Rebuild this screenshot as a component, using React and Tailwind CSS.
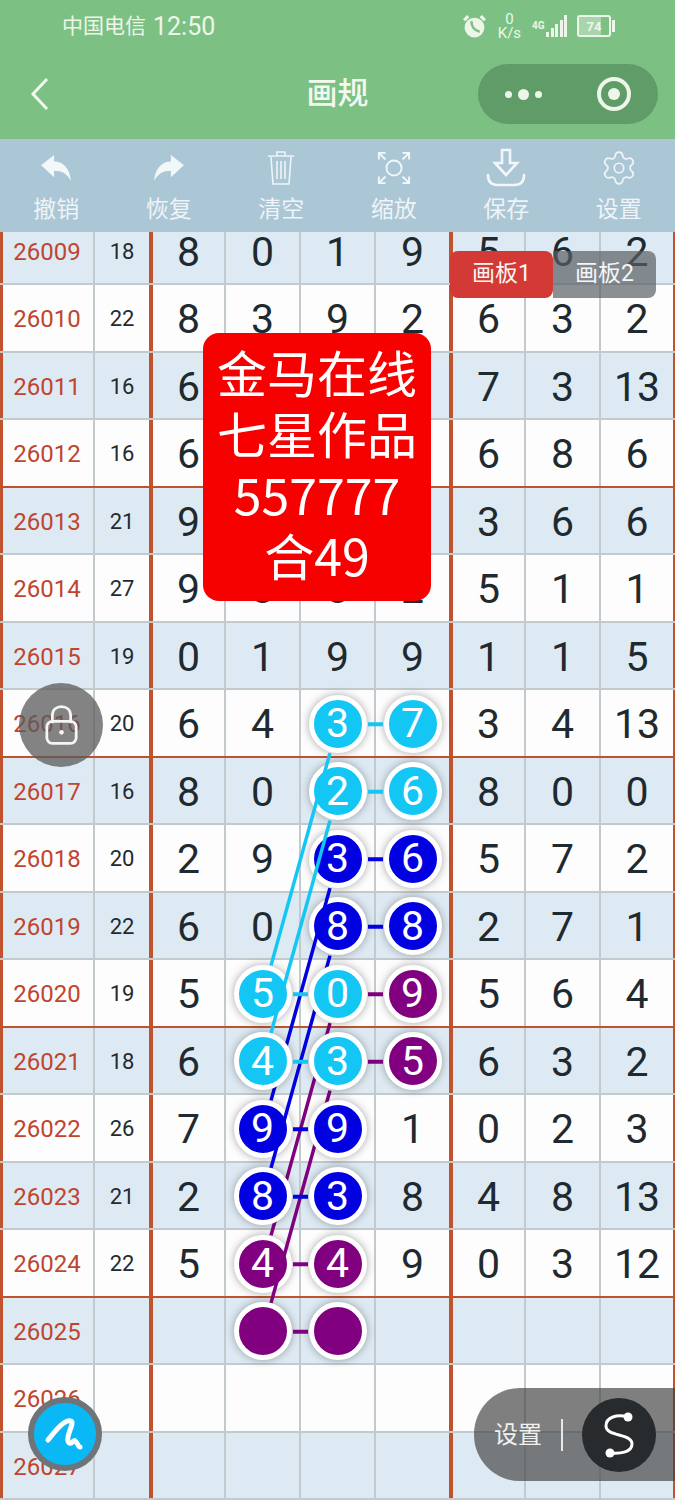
import { Settings } from 'lucide-react';

const ROW_H = 67.5;
const colX = [188, 263, 338, 413, 488, 563, 638];
const rowY = (i) => i * ROW_H + ROW_H / 2;

const rows = [
  ['26009', '18', [8, 0, 1, 9, 5, 6, 2]],
  ['26010', '22', [8, 3, 9, 2, 6, 3, 2]],
  ['26011', '16', [6, '', '', '', 7, 3, 13]],
  ['26012', '16', [6, '', '', '', 6, 8, 6]],
  ['26013', '21', [9, '', '', '', 3, 6, 6]],
  ['26014', '27', [9, 8, 8, 2, 5, 1, 1]],
  ['26015', '19', [0, 1, 9, 9, 1, 1, 5]],
  ['26016', '20', [6, 4, 3, 7, 3, 4, 13]],
  ['26017', '16', [8, 0, 2, 6, 8, 0, 0]],
  ['26018', '20', [2, 9, 3, 6, 5, 7, 2]],
  ['26019', '22', [6, 0, 8, 8, 2, 7, 1]],
  ['26020', '19', [5, 5, 0, 9, 5, 6, 4]],
  ['26021', '18', [6, 4, 3, 5, 6, 3, 2]],
  ['26022', '26', [7, 9, 9, 1, 0, 2, 3]],
  ['26023', '21', [2, 8, 3, 8, 4, 8, 13]],
  ['26024', '22', [5, 4, 4, 9, 0, 3, 12]],
  ['26025', '', ['', '', '', '', '', '', '']],
  ['26026', '', ['', '', '', '', '', '', '']],
  ['26027', '', ['', '', '', '', '', '', '']],
];

// row index -> { column index: colour key }
const marks = {
  7: { 2: 'c', 3: 'c' },
  8: { 2: 'c', 3: 'c' },
  9: { 2: 'b', 3: 'b' },
  10: { 2: 'b', 3: 'b' },
  11: { 1: 'c', 2: 'c', 3: 'p' },
  12: { 1: 'c', 2: 'c', 3: 'p' },
  13: { 1: 'b', 2: 'b' },
  14: { 1: 'b', 2: 'b' },
  15: { 1: 'p', 2: 'p' },
  16: { 1: 'p', 2: 'p' },
};

const dotStyles = {
  c: 'z-30 bg-[#14c6f4]',
  b: 'z-20 bg-[#0000e0]',
  p: 'z-10 bg-[#800080]',
};

const layers = [
  {
    color: '#800080',
    z: 'z-[11]',
    slants: [[11, 15], [12, 16]],
    links: [[11, 2], [12, 2], [15, 1], [16, 1]],
  },
  {
    color: '#0000e0',
    z: 'z-[21]',
    slants: [[9, 13], [10, 14]],
    links: [[9, 2], [10, 2], [13, 1], [14, 1]],
  },
  {
    color: '#14c6f4',
    z: 'z-[31]',
    slants: [[7, 11], [8, 12]],
    links: [[7, 2], [8, 2], [11, 1], [12, 1]],
  },
];

function LineLayer({ layer }) {
  return (
    <svg
      className={`absolute left-0 top-0 pointer-events-none ${layer.z}`}
      width="675"
      height="1282.5"
      viewBox="0 0 675 1282.5"
    >
      {layer.slants.map(([from, to]) => {
        const x1 = colX[2];
        const y1 = rowY(from);
        const x2 = colX[1];
        const y2 = rowY(to);
        const len = Math.hypot(x2 - x1, y2 - y1);
        const ux = (x2 - x1) / len;
        const uy = (y2 - y1) / len;
        return (
          <line
            key={from}
            x1={x1 + ux * 30}
            y1={y1 + uy * 30}
            x2={x2 - ux * 30}
            y2={y2 - uy * 30}
            stroke={layer.color}
            strokeWidth="3.5"
          />
        );
      })}
      {layer.links.map(([row, col]) => (
        <line
          key={`${row}-${col}`}
          x1={colX[col] + 30}
          y1={rowY(row)}
          x2={colX[col + 1] - 30}
          y2={rowY(row)}
          stroke={layer.color}
          strokeWidth="4"
        />
      ))}
    </svg>
  );
}

function Row({ index, issue, sum, digits }) {
  const striped = index % 2 === 0;
  const heavy = index % 4 === 3 && index < 16;
  return (
    <div
      className={`grid grid-cols-[93px_56px_75px_75px_75px_75px_75px_75px_76px] h-[67.5px] border-b-2 ${
        heavy ? 'border-[#c0532e]' : 'border-[#c3cace]'
      } ${striped ? 'bg-[#deeaf3]' : 'bg-[#fdfdfd]'}`}
    >
      <div className="flex items-center justify-center pt-[3px] pr-[2px] border-l-[3px] border-[#c0532e] text-[24px] text-[#c0452f]">
        {issue}
      </div>
      <div className="flex items-center justify-center pt-[2px] border-l-2 border-[#c3cace] text-[22px] text-[#222b30]">
        {sum}
      </div>
      {digits.map((d, col) => {
        const mark = marks[index]?.[col];
        const edge =
          col === 0 || col === 4
            ? 'border-l-[4px] border-[#c0532e]'
            : 'border-l-2 border-[#c3cace]';
        return (
          <div
            key={col}
            className={`relative flex items-center justify-center pt-[2px] text-[41px] font-normal text-[#1f2a30] ${edge} ${
              col === 6 ? 'border-r-2 border-r-[#c0532e]' : ''
            }`}
          >
            {mark ? (
              <div
                className={`relative flex items-center justify-center w-[58px] h-[58px] shrink-0 rounded-full border-[5px] border-white text-white text-[41px] font-normal shadow-[0_0_8px_rgba(0,0,0,0.35)] ${dotStyles[mark]}`}
              >
                {index === 16 ? '' : d}
              </div>
            ) : (
              <span className="mt-[2px]">{d}</span>
            )}
          </div>
        );
      })}
    </div>
  );
}

function ToolButton({ label, children }) {
  return (
    <div className="flex-1 flex flex-col items-center">
      <div className="h-[42px] flex items-center justify-center">{children}</div>
      <span className="mt-[6px] text-[23px] leading-[30px] text-[#eef4f7]">{label}</span>
    </div>
  );
}

function StatusIcons() {
  return (
    <div className="flex items-center gap-[10px] text-[#eef6ea]">
      <svg width="25" height="25" viewBox="0 0 24 24">
        <circle cx="12" cy="13" r="9.5" fill="#eef6ea" />
        <path d="M2 6l4-4M22 6l-4-4" stroke="#eef6ea" strokeWidth="3" />
        <path d="M9 7c0 5 3 9 8 10" stroke="#7cc183" strokeWidth="2.5" fill="none" />
      </svg>
      <div className="flex flex-col items-center leading-[14px] text-[15px] w-[25px]">
        <span>0</span>
        <span>K/s</span>
      </div>
      <div className="flex items-end gap-[1.5px] h-[22px]">
        <span className="text-[10px] leading-[10px] font-bold mb-[6px]">4G</span>
        <span className="w-[3px] h-[5px] bg-[#eef6ea]" />
        <span className="w-[3px] h-[9px] bg-[#eef6ea]" />
        <span className="w-[3px] h-[13px] bg-[#eef6ea]" />
        <span className="w-[3px] h-[17px] bg-[#eef6ea]" />
        <span className="w-[3px] h-[22px] bg-[#eef6ea]" />
      </div>
      <div className="flex items-center gap-[1px]">
        <div className="relative flex items-center justify-center w-[34px] h-[22px] rounded-[3px] border-2 border-[#eef6ea] overflow-hidden">
          <div className="absolute left-0 top-0 bottom-0 w-[74%] bg-[#a9d5ad]" />
          <span className="relative text-[13px] font-bold leading-none">74</span>
        </div>
        <span className="w-[3px] h-[12px] bg-[#eef6ea]" />
      </div>
    </div>
  );
}

export default function App() {
  return (
    <div className="relative w-[675px] h-[1500px] overflow-hidden bg-white font-['Roboto','Noto_Sans_CJK_SC',sans-serif]">
      {/* Title bar and toolbar */}
      <div className="relative z-50">
        <div className="h-[139px] bg-[#7cc183] flex flex-col">
          <div className="h-[52px] flex items-center justify-between pl-[62px] pr-[60px] text-[#eef6ea]">
            <span className="flex items-center gap-[7px] leading-none">
              <span className="text-[21px]">中国电信</span>
              <span className="text-[25px]">12:50</span>
            </span>
            <StatusIcons />
          </div>
          <div className="relative flex items-center justify-between h-[60px] mt-[12px] pl-[30px] pr-[17px]">
            <svg width="20" height="34" viewBox="0 0 20 34" fill="none" stroke="#f3f8f0" strokeWidth="3">
              <path d="M17 2L3 17l14 15" />
            </svg>
            <span className="absolute left-0 right-0 text-center text-[31px] font-medium text-[#f3f8f0] pointer-events-none">
              画规
            </span>
            <div className="flex items-center justify-between w-[180px] h-[60px] rounded-full bg-[#609c68] pl-[27px] pr-[27px]">
              <div className="flex items-center gap-[6px]">
                <span className="w-[7px] h-[7px] rounded-full bg-[#eef6ea]" />
                <span className="w-[11px] h-[11px] rounded-full bg-[#eef6ea]" />
                <span className="w-[7px] h-[7px] rounded-full bg-[#eef6ea]" />
              </div>
              <div className="flex items-center justify-center w-[34px] h-[34px] rounded-full border-[4px] border-[#eef6ea]">
                <span className="w-[12px] h-[12px] rounded-full bg-[#eef6ea]" />
              </div>
            </div>
          </div>
        </div>
        <div className="h-[93px] bg-[#abc6d5] flex pt-[8px]">
          <ToolButton label="撤销">
            <svg width="32" height="28" viewBox="0 0 34 30" fill="#f2f7fa">
              <path d="M1 12L15 1v7c10 0 17 8 18 21-4-8-10-11-18-11v7z" />
            </svg>
          </ToolButton>
          <ToolButton label="恢复">
            <svg width="32" height="28" viewBox="0 0 34 30" fill="#f2f7fa">
              <path d="M33 12L19 1v7C9 8 2 16 1 29c4-8 10-11 18-11v7z" />
            </svg>
          </ToolButton>
          <ToolButton label="清空">
            <svg width="28" height="36" viewBox="0 0 28 36" fill="none" stroke="#eef4f7" strokeWidth="1.6">
              <path d="M1 6h26M10 6V2h8v4M4 7l2 27h16l2-27M10 11v18M14 11v18M18 11v18" />
            </svg>
          </ToolButton>
          <ToolButton label="缩放">
            <svg width="34" height="34" viewBox="0 0 36 36" fill="none" stroke="#f2f7fa" strokeWidth="2">
              <circle cx="18" cy="18" r="8" />
              <path d="M2 9V2h7M2 2l7 7M34 9V2h-7M34 2l-7 7M2 27v7h7M2 34l7-7M34 27v7h-7M34 34l-7-7" />
            </svg>
          </ToolButton>
          <ToolButton label="保存">
            <svg width="42" height="40" viewBox="0 0 42 40" fill="none" stroke="#f2f7fa" strokeWidth="2.6">
              <path d="M17 2h8v13h7L21 27 10 15h7z" />
              <path d="M3 27c0 7 4 10 10 10h16c6 0 10-3 10-10" strokeLinecap="round" />
            </svg>
          </ToolButton>
          <ToolButton label="设置">
            <Settings size={38} color="#eef4f7" strokeWidth={1.1} />
          </ToolButton>
        </div>
      </div>

      {/* Chart grid, first row runs under the toolbar */}
      <div className="relative mt-[-14.5px]">
        {rows.map(([issue, sum, digits], i) => (
          <Row key={issue} index={i} issue={issue} sum={sum} digits={digits} />
        ))}
        {layers.map((layer) => (
          <LineLayer key={layer.color} layer={layer} />
        ))}
      </div>

      {/* Board tabs */}
      <div className="absolute z-40 left-[450px] top-[251px] flex w-[206px] h-[47px] text-[23px] text-[#f5f5f5]">
        <div className="relative z-10 flex-1 flex items-center justify-center rounded-[8px] bg-[#d43a35]">画板1</div>
        <div className="flex-1 flex items-center justify-center rounded-r-[8px] bg-[#5a5f63]/70">画板2</div>
      </div>

      {/* Red note */}
      <div className="absolute z-40 left-[203px] top-[333px] w-[228px] h-[268px] rounded-[16px] bg-[#f60000] flex flex-col items-center justify-center pb-[8px] text-white text-[50px] font-['Noto_Sans_CJK_SC',sans-serif]">
        <span className="h-[61px] leading-[61px]">金马在线</span>
        <span className="h-[61px] leading-[61px]">七星作品</span>
        <span className="h-[61px] leading-[61px]">557777</span>
        <span className="h-[61px] leading-[61px]">合49</span>
      </div>

      {/* Lock button */}
      <div className="absolute z-40 left-[19px] top-[683px] w-[84px] h-[84px] rounded-full bg-[#5a5a5a]/75 flex items-center justify-center">
        <svg width="33" height="42" viewBox="0 0 36 44" fill="none" stroke="#f5f5f5" strokeWidth="3">
          <path d="M8 20V12C8 5 13 2 18 2s10 3 10 10v8" />
          <rect x="2" y="18" width="32" height="24" rx="6" />
          <circle cx="18" cy="30" r="2.5" fill="#f5f5f5" stroke="none" />
        </svg>
      </div>

      {/* Pen button */}
      <div className="absolute z-40 left-[28px] top-[1397px] w-[74px] h-[74px] rounded-full border-[6px] border-[#6f7478] bg-[#0ab8f5] flex items-center justify-center">
        <svg width="62" height="62" viewBox="6 6 62 62" fill="none" stroke="white" strokeWidth="5" strokeLinecap="round" strokeLinejoin="round">
          <path d="M20 43C30 30 38 22 43 24c4 2-5 14-3 20 2 6 6-2 7 0 3 2 3 6 5 6" />
        </svg>
      </div>

      {/* Settings pill */}
      <div className="absolute z-40 left-[474px] top-[1388px] w-[201px] h-[93px] rounded-l-[46px] bg-[#3c3c3c]/65 flex items-center pl-[20px]">
        <span className="text-[24px] text-[#f0f0f0]">设置</span>
        <span className="ml-[19px] w-[2px] h-[32px] bg-[#e8e8e8]" />
        <div className="ml-[19px] w-[74px] h-[74px] rounded-full bg-[#272b2e] flex items-center justify-center">
          <svg width="44" height="52" viewBox="0 0 44 52" fill="none" stroke="white" strokeWidth="3">
            <path d="M31 8C20 5 9 8 9 17c0 11 26 7 26 18 0 8-11 10-22 9" />
            <circle cx="31" cy="8" r="4.5" fill="white" stroke="none" />
            <circle cx="13" cy="44" r="4.5" fill="white" stroke="none" />
          </svg>
        </div>
      </div>
    </div>
  );
}
